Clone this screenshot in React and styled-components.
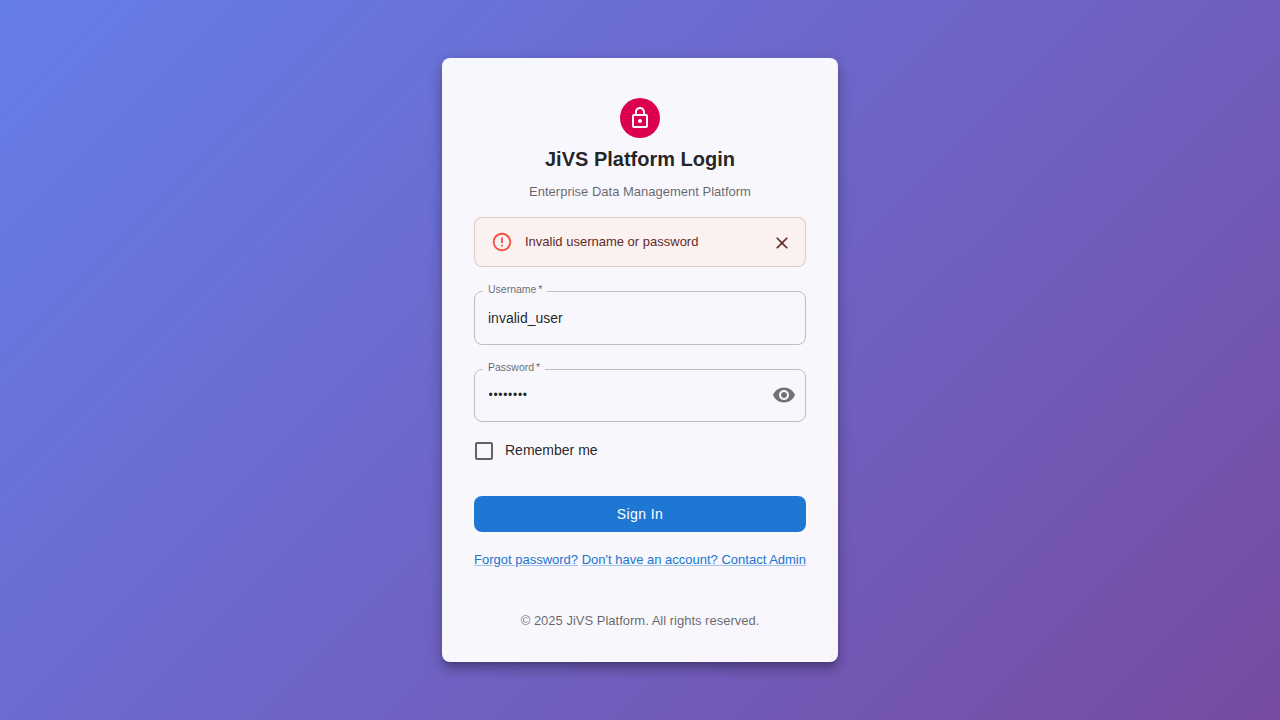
import React from "react";
import styled, { createGlobalStyle } from "styled-components";

const Global = createGlobalStyle`
  *, *::before, *::after { box-sizing: border-box; }
  body {
    margin: 0;
    font-family: "Liberation Sans", Arial, sans-serif;
    color: rgba(0, 0, 0, 0.87);
    -webkit-font-smoothing: antialiased;
  }
`;

const Page = styled.main`
  min-height: 100vh;
  display: flex;
  align-items: center;
  justify-content: center;
  background: linear-gradient(135deg, #667eea 0%, #764ba2 100%);
`;

const Card = styled.section`
  width: 396px;
  height: 604px;
  padding: 40px 32px 28px;
  display: flex;
  flex-direction: column;
  align-items: center;
  border-radius: 8px;
  background: rgba(255, 255, 255, 0.95);
  box-shadow: 0 5px 5px -3px rgba(0, 0, 0, 0.2), 0 8px 10px 1px rgba(0, 0, 0, 0.14),
    0 3px 14px 2px rgba(0, 0, 0, 0.12);

  > * {
    flex-shrink: 0;
  }
`;

const Avatar = styled.div`
  width: 40px;
  height: 40px;
  display: flex;
  align-items: center;
  justify-content: center;
  border-radius: 50%;
  background: #dc004e;
  color: #fff;
`;

const Icon = styled.svg`
  display: block;
  width: ${(p) => p.$size}px;
  height: ${(p) => p.$size}px;
  fill: currentColor;
`;

const Title = styled.h1`
  margin: 8px 0 0;
  font-size: 20px;
  line-height: 27px;
  font-weight: 700;
`;

const Subtitle = styled.p`
  margin: 9px 0 0;
  font-size: 13px;
  line-height: 19px;
  color: rgba(0, 0, 0, 0.6);
`;

const Alert = styled.div`
  width: 100%;
  height: 50px;
  margin-top: 16px;
  padding: 0 13px 0 16px;
  display: flex;
  align-items: center;
  gap: 12px;
  border: 1px solid rgba(95, 33, 32, 0.18);
  border-radius: 8px;
  background: #fbf1f0;
  color: #5f2b2a;
  font-size: 13px;
`;

const AlertIcon = styled.span`
  color: #f44f45;
`;

const AlertText = styled.span`
  flex: 1;
  padding-bottom: 1px;
`;

const IconButton = styled.button`
  padding: ${(p) => p.$drop || 0}px 0 0;
  border: 0;
  background: none;
  color: ${(p) => p.$color || "inherit"};
`;

const Field = styled.fieldset`
  width: 100%;
  min-width: 0;
  height: ${(p) => p.$height}px;
  margin: 16px 0 0;
  padding: 0 9px 5px 8px;
  display: flex;
  align-items: center;
  border: 1px solid rgba(0, 0, 0, 0.23);
  border-radius: 8px;
`;

const Legend = styled.legend`
  padding: 0 5px 5px;
  font-size: 10.5px;
  line-height: 12px;
  word-spacing: -1px;
  color: rgba(0, 0, 0, 0.6);
`;

const Input = styled.input`
  flex: 1;
  min-width: 0;
  height: 36px;
  padding: 0 5px;
  border: 0;
  outline: 0;
  background: transparent;
  color: inherit;
  font: 14px "Liberation Sans", Arial, sans-serif;
`;

const PasswordInput = styled(Input)`
  height: 34px;
  padding: 0 5.5px;
  font-size: 12px;
  letter-spacing: 0.7px;
`;

const Remember = styled.label`
  align-self: flex-start;
  margin: 17px 0 0 -2px;
  height: 24px;
  display: flex;
  align-items: center;
  gap: 9px;
  font-size: 14px;
`;

const RememberText = styled.span`
  padding-bottom: 2px;
`;

const CheckIcon = styled.span`
  color: rgba(0, 0, 0, 0.6);
`;

const SignIn = styled.button`
  width: 100%;
  height: 36px;
  margin-top: 33px;
  border: 0;
  border-radius: 8px;
  background: #1e77d2;
  color: #fff;
  font: 14px "Liberation Sans", Arial, sans-serif;
  letter-spacing: 0.4px;
`;

const Links = styled.nav`
  width: 100%;
  margin-top: 18px;
  display: flex;
  justify-content: space-between;
  white-space: nowrap;
  font-size: 13px;
  line-height: 20px;
`;

const TextLink = styled.a`
  color: #1976d2;
  text-decoration: underline;
  text-decoration-color: rgba(25, 118, 210, 0.4);
`;

const Footer = styled.footer`
  margin-top: 41px;
  font-size: 13px;
  line-height: 20px;
  color: rgba(0, 0, 0, 0.6);
`;

const paths = {
  lock: "M12 17c1.1 0 2-.9 2-2s-.9-2-2-2-2 .9-2 2 .9 2 2 2zm6-9h-1V6c0-2.76-2.24-5-5-5S7 3.24 7 6v2H6c-1.1 0-2 .9-2 2v10c0 1.1.9 2 2 2h12c1.1 0 2-.9 2-2V10c0-1.1-.9-2-2-2zM8.9 6c0-1.71 1.39-3.1 3.1-3.1s3.1 1.39 3.1 3.1v2H8.9V6zM18 20H6V10h12v10z",
  error: "M11 15h2v2h-2zm0-8h2v6h-2zm.99-5C6.47 2 2 6.48 2 12s4.47 10 9.99 10C17.52 22 22 17.52 22 12S17.52 2 11.99 2zM12 20c-4.42 0-8-3.58-8-8s3.58-8 8-8 8 3.58 8 8-3.58 8-8 8z",
  close: "M19 6.41L17.59 5 12 10.59 6.41 5 5 6.41 10.59 12 5 17.59 6.41 19 12 13.41 17.59 19 19 17.59 13.41 12z",
  eye: "M12 4.5C7 4.5 2.73 7.61 1 12c1.73 4.39 6 7.5 11 7.5s9.27-3.11 11-7.5c-1.73-4.39-6-7.5-11-7.5zM12 17c-2.76 0-5-2.24-5-5s2.24-5 5-5 5 2.24 5 5-2.24 5-5 5zm0-8c-1.66 0-3 1.34-3 3s1.34 3 3 3 3-1.34 3-3-1.34-3-3-3z",
  box: "M19 5v14H5V5h14m0-2H5c-1.1 0-2 .9-2 2v14c0 1.1.9 2 2 2h14c1.1 0 2-.9 2-2V5c0-1.1-.9-2-2-2z",
};

const Glyph = ({ name, size = 24 }) => (
  <Icon $size={size} viewBox="0 0 24 24" aria-hidden="true">
    <path d={paths[name]} />
  </Icon>
);

export default function App() {
  return (
    <>
      <Global />
      <Page>
        <Card>
          <Avatar><Glyph name="lock" /></Avatar>
          <Title>JiVS Platform Login</Title>
          <Subtitle>Enterprise Data Management Platform</Subtitle>
          <Alert role="alert">
            <AlertIcon><Glyph name="error" size={22} /></AlertIcon>
            <AlertText>Invalid username or password</AlertText>
            <IconButton $drop={2} aria-label="Close"><Glyph name="close" size={20} /></IconButton>
          </Alert>
          <Field $height={62}>
            <Legend>Username *</Legend>
            <Input aria-label="Username" defaultValue="invalid_user" />
          </Field>
          <Field $height={61}>
            <Legend>Password *</Legend>
            <PasswordInput aria-label="Password" type="password" defaultValue="password" />
            <IconButton $color="rgba(0, 0, 0, 0.54)" aria-label="Show password"><Glyph name="eye" /></IconButton>
          </Field>
          <Remember>
            <CheckIcon><Glyph name="box" /></CheckIcon>
            <RememberText>Remember me</RememberText>
          </Remember>
          <SignIn>Sign In</SignIn>
          <Links>
            <TextLink>Forgot password?</TextLink>
            <TextLink>Don't have an account? Contact Admin</TextLink>
          </Links>
          <Footer>© 2025 JiVS Platform. All rights reserved.</Footer>
        </Card>
      </Page>
    </>
  );
}
